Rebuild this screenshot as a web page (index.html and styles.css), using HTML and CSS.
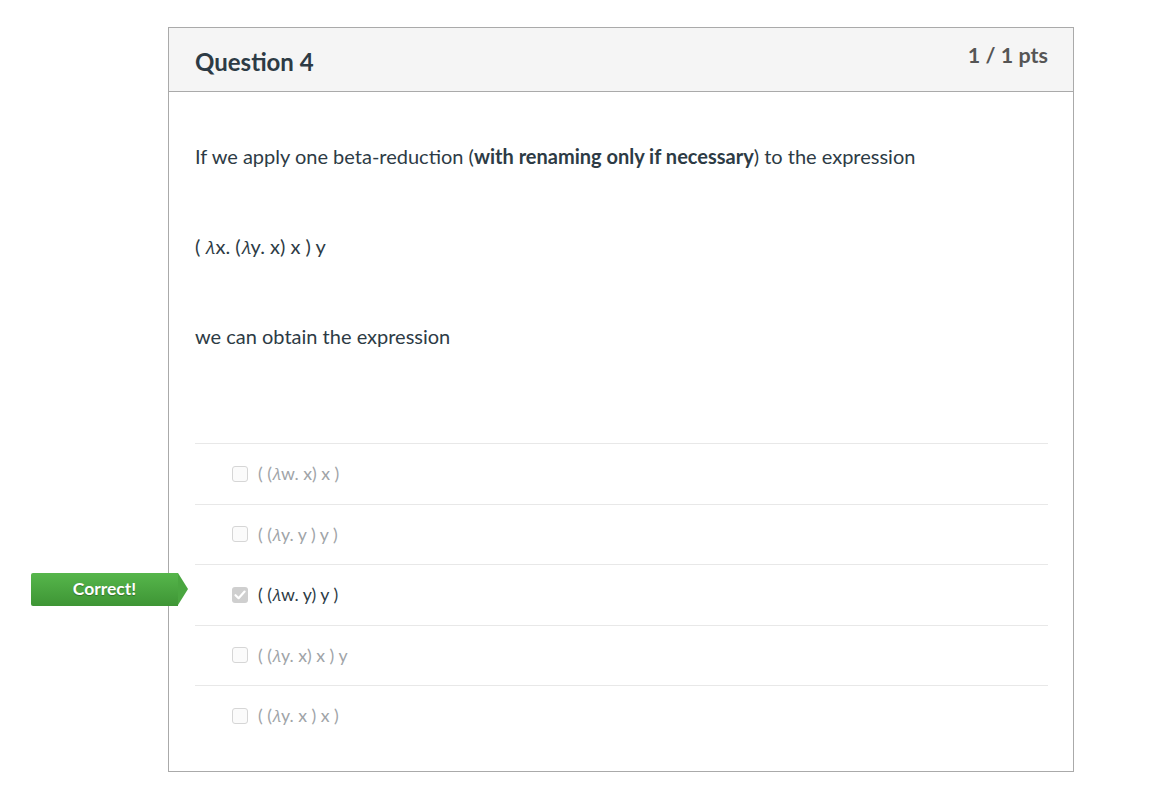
FILE: index.html
```html
<!DOCTYPE html>
<html>
<head>
<meta charset="utf-8">
<link rel="stylesheet" href="styles.css">
</head>
<body>
<div class="card">
  <div class="header">
    <h2 class="title">Question 4</h2>
    <div class="pts">1 / 1 pts</div>
  </div>
  <div class="content">
    <p class="q">If we apply one beta-reduction (<strong>with renaming only if necessary</strong>) to the expression</p>
    <p class="q">( <span class="lam">𝜆</span>x. (<span class="lam">𝜆</span>y. x) x ) y</p>
    <p class="q">we can obtain the expression</p>
    <div class="answers">
      <div class="answer">
        <span class="box"></span>
        <span class="atext">( (<span class="lam">𝜆</span>w. x) x )</span>
      </div>
      <div class="answer">
        <span class="box"></span>
        <span class="atext">( (<span class="lam">𝜆</span>y. y ) y )</span>
      </div>
      <div class="answer selected">
        <div class="badge">Correct!</div>
        <span class="box checked">
          <svg viewBox="0 0 16 16" width="16" height="16"><path d="M3.5 8.2 L6.6 11.2 L12.6 4.6" fill="none" stroke="#fff" stroke-width="2.2" stroke-linecap="round" stroke-linejoin="round"/></svg>
        </span>
        <span class="atext">( (<span class="lam">𝜆</span>w. y) y )</span>
      </div>
      <div class="answer">
        <span class="box"></span>
        <span class="atext">( (<span class="lam">𝜆</span>y. x) x ) y</span>
      </div>
      <div class="answer last">
        <span class="box"></span>
        <span class="atext">( (<span class="lam">𝜆</span>y. x ) x )</span>
      </div>
    </div>
  </div>
</div>
</body>
</html>
```
FILE: styles.css
```css
html, body {
  margin: 0;
  padding: 0;
  background: #fff;
}
body {
  padding-top: 27px;
  font-family: Lato, "Liberation Sans", sans-serif;
  color: #2d3b45;
}
.card {
  margin-left: 168px;
  width: 904px;
  border: 1px solid #aaaaaa;
  box-sizing: content-box;
}
.header {
  height: 63px;
  background: #f5f5f5;
  border-bottom: 1px solid #aaaaaa;
  padding: 0 25px 0 26px;
  display: flex;
  justify-content: space-between;
  align-items: flex-start;
}
.title {
  margin: 0;
  padding-top: 18px;
  font-size: 24px;
  line-height: 32px;
  font-weight: 700;
  color: #2d3b45;
}
.pts {
  padding-top: 13px;
  font-size: 21.5px;
  line-height: 28px;
  font-weight: 700;
  color: #555555;
}
.content {
  padding: 49px 25px 25px 26px;
}
.q {
  margin: 0 0 60px 0;
  font-size: 20px;
  line-height: 30px;
}
.q strong {
  font-weight: 700;
}
.lam {
  font-family: "DejaVu Sans", sans-serif;
  font-size: 0.9em;
  line-height: 0;
}
.answers {
  margin-top: 92px;
  border-top: 1px solid #e8e8e8;
}
.answer {
  position: relative;
  height: 59.5px;
  border-bottom: 1px solid #e8e8e8;
  display: flex;
  align-items: center;
  padding-left: 37px;
  gap: 10px;
  font-size: 17.7px;
  color: #a0a4a8;
}
.answer.last {
  border-bottom: none;
}
.answer.selected {
  color: #2d3b45;
}
.box {
  width: 14px;
  height: 14px;
  border: 1px solid #d6d6d6;
  border-radius: 3px;
  background: #fbfbfb;
  display: flex;
  align-items: center;
  justify-content: center;
}
.box.checked {
  width: 16px;
  height: 16px;
  border: none;
  background: #cfcfcf;
}
.badge {
  position: absolute;
  left: -164px;
  top: 8px;
  width: 147px;
  height: 33px;
  line-height: 32px;
  background: linear-gradient(#56b64b, #3e9535);
  color: #fff;
  font-weight: 700;
  font-size: 17.5px;
  text-align: center;
  border-radius: 2px 0 0 2px;
  text-shadow: 0 1px 1px rgba(0,0,0,0.3);
}
.badge::after {
  content: "";
  position: absolute;
  right: -10px;
  top: 0;
  border-top: 16.5px solid transparent;
  border-bottom: 16.5px solid transparent;
  border-left: 10px solid #4aa640;
}
```
